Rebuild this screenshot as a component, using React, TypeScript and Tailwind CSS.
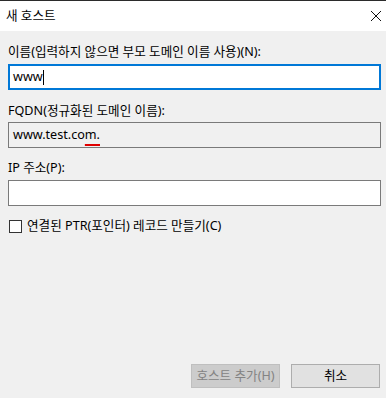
export default function App() {
  const font = { fontFamily: '"Noto Sans", "Noto Sans CJK KR", sans-serif' };
  return (
    <div className="w-[386px] h-[398px] bg-[#f0f0f0] flex flex-col text-[12.6px] text-black overflow-hidden" style={font}>
      {/* 제목 표시줄 */}
      <div className="h-[31px] bg-white border-t border-[#2b2b2b] flex items-center justify-between pl-[6px] pr-[3px] shrink-0">
        <span className="leading-4">새 호스트</span>
        <svg width="12" height="12" viewBox="0 0 12 12" className="mr-[1px]">
          <path d="M1 1 L11 11 M11 1 L1 11" stroke="#111" strokeWidth="1" />
        </svg>
      </div>

      <div className="flex flex-col flex-1 px-2 pt-[13px] pb-[10px]">
        <label className="leading-4 h-4">이름(입력하지 않으면 부모 도메인 이름 사용)(N):</label>
        <div className="mt-1 h-[26px] w-[373px] bg-white border-2 border-[#0078d7] flex items-center px-[3px]">
          <span className="leading-4">www</span>
          <span className="w-px h-[15px] bg-black" />
        </div>

        <label className="mt-[13px] leading-4 h-4">FQDN(정규화된 도메인 이름):</label>
        <div className="mt-[3px] h-[26px] w-[373px] bg-[#f0f0f0] border border-[#7a7a7a] flex items-center px-[4px]">
          <span className="leading-4">
            www.test.co
            <span className="underline decoration-[#e00000] decoration-2 underline-offset-[5px]">m.</span>
          </span>
        </div>

        <label className="mt-3 leading-4 h-4">IP 주소(P):</label>
        <div className="mt-1 h-[26px] w-[373px] bg-white border border-[#7a7a7a]" />

        <div className="mt-3 flex items-center gap-[5px] pl-px">
          <span className="w-[13px] h-[13px] border border-[#333] bg-white" />
          <span className="leading-4">연결된 PTR(포인터) 레코드 만들기(C)</span>
        </div>

        <div className="mt-auto flex justify-end gap-[11px] mr-[-2px]">
          <button className="w-[89px] h-[24px] bg-[#cccccc] border border-[#bfbfbf] text-[#838383] leading-4">
            호스트 추가(H)
          </button>
          <button className="w-[89px] h-[24px] bg-[#e1e1e1] border border-[#adadad] leading-4">
            취소
          </button>
        </div>
      </div>
    </div>
  );
}
